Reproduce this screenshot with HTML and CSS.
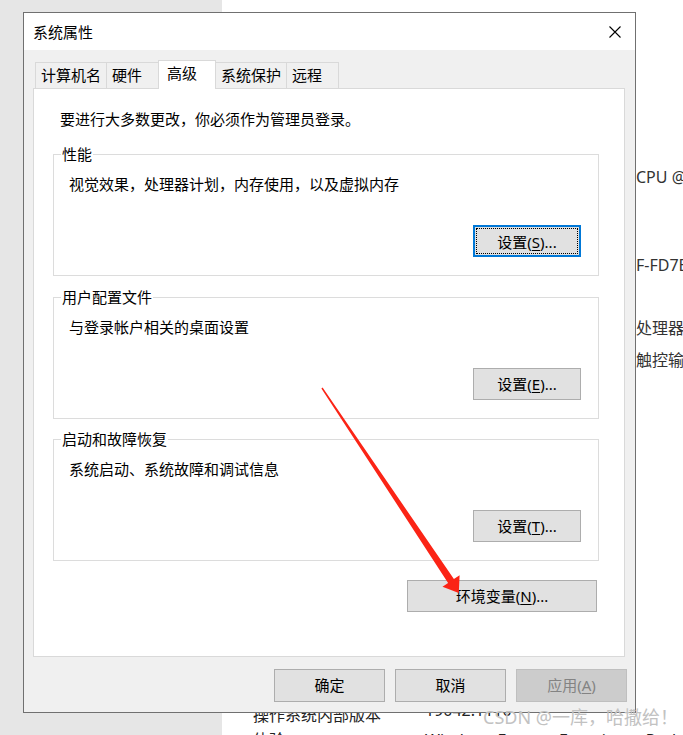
FILE: index.html
```html
<!DOCTYPE html>
<html lang="zh-CN">
<head>
<meta charset="utf-8">
<title>系统属性</title>
<link rel="stylesheet" href="styles.css">
</head>
<body>
<div class="page">
  <aside class="sidebar"></aside>
  <main class="about">
    <p class="security">此设备已受到监视和保护。<span class="link">在 Windows 安全中心中查看</span></p>
    <div class="values">
      <p class="val v1">CPU @ 1.60GHz   1.80 GHz</p>
      <p class="val v2">F-FD7B3C0E</p>
      <p class="val v3">处理器</p>
      <p class="val v4">触控输入</p>
    </div>
    <div class="specs">
      <div class="spec"><span class="spec-k">操作系统内部版本</span><span class="spec-v">19042.1110</span></div>
      <div class="spec"><span class="spec-k">体验</span><span class="spec-v">Windows Feature Experience Pack</span></div>
    </div>
  </main>
</div>

<div class="dialog">
  <div class="titlebar">
    <span class="title">系统属性</span>
    <svg class="close" viewBox="0 0 12 12" width="12" height="12"><path d="M0.5 0.5L11.5 11.5M11.5 0.5L0.5 11.5" stroke="#000" stroke-width="1.1" fill="none"/></svg>
  </div>
  <div class="dlg-body">
    <div class="tabs">
      <div class="tab">计算机名</div>
      <div class="tab">硬件</div>
      <div class="tab tab-active">高级</div>
      <div class="tab">系统保护</div>
      <div class="tab">远程</div>
    </div>
    <div class="panel">
      <p class="intro">要进行大多数更改，你必须作为管理员登录。</p>
      <fieldset class="group">
        <legend>性能</legend>
        <p class="desc">视觉效果，处理器计划，内存使用，以及虚拟内存</p>
        <div class="group-actions"><button class="btn btn-set btn-focus">设置(<u>S</u>)...</button></div>
      </fieldset>
      <fieldset class="group group-2">
        <legend>用户配置文件</legend>
        <p class="desc">与登录帐户相关的桌面设置</p>
        <div class="group-actions"><button class="btn btn-set">设置(<u>E</u>)...</button></div>
      </fieldset>
      <fieldset class="group group-3">
        <legend>启动和故障恢复</legend>
        <p class="desc">系统启动、系统故障和调试信息</p>
        <div class="group-actions"><button class="btn btn-set">设置(<u>T</u>)...</button></div>
      </fieldset>
      <div class="env-row"><button class="btn btn-env">环境变量(<u>N</u>)...</button></div>
    </div>
    <div class="footer">
      <button class="btn btn-foot">确定</button>
      <button class="btn btn-foot">取消</button>
      <button class="btn btn-foot" disabled>应用(<u>A</u>)</button>
    </div>
  </div>
</div>

<div class="watermark">CSDN @一库，哈撒给！</div>

<svg class="arrow" viewBox="0 0 683 735" width="683" height="735">
  <polygon points="322.6,387.6 453.9,579.1 459.6,575.2 458.8,593 442.5,586.8 448.1,582.9 321.4,388.4" fill="#fb2416"/>
</svg>
</body>
</html>
```

FILE: styles.css
```css
* { box-sizing: border-box; }
html, body { margin: 0; padding: 0; }
body {
  width: 683px;
  height: 735px;
  overflow: hidden;
  position: relative;
  background: #fff;
  font-family: "Noto Sans", "Noto Sans CJK SC", sans-serif;
}
p { margin: 0; }

/* background settings page */
.page { display: flex; height: 735px; }
.sidebar { width: 222px; flex: none; background: #e6e6e6; }
.about { flex: 1; min-width: 0; overflow: hidden; font-size: 16px; color: #333; }
.security { padding-top: 9px; margin-left: 33px; line-height: 20px; font-size: 15px; white-space: nowrap; color: #222; }
.link { color: #0067c0; }
.values { margin-left: 414px; white-space: nowrap; }
.val { line-height: 22px; }
.v1 { margin-top: 137px; }
.v2 { margin-top: 66px; }
.v3 { margin-top: 41px; }
.v4 { margin-top: 10px; }
.specs { margin-top: 332px; padding-left: 31px; color: #222; }
.spec { display: flex; align-items: flex-start; line-height: 25px; white-space: nowrap; }
.spec-k { width: 172px; flex: none; }
.spec:first-child .spec-v { line-height: 14px; }

/* dialog window */
.dialog {
  position: absolute;
  left: 23px;
  top: 12px;
  width: 613px;
  border: 1px solid #707070;
  background: #f0f0f0;
  font-size: 15px;
  color: #000;
}
.titlebar {
  height: 37px;
  background: #fff;
  display: flex;
  align-items: center;
  justify-content: space-between;
  padding: 0 14px 0 9px;
}
.title { line-height: 20px; }
.close { display: block; }

.dlg-body { padding: 10px 0 10px 9px; }

.tabs { display: flex; align-items: flex-end; height: 28px; margin-left: 2px; }
.tab {
  position: relative;
  height: 26px;
  min-width: 53px;
  padding: 0 5px;
  margin-left: -1px;
  border: 1px solid #d9d9d9;
  border-bottom: none;
  background: #f0f0f0;
  line-height: 25px;
  white-space: nowrap;
}
.tab:first-child { margin-left: 0; }
.tab-active {
  z-index: 1;
  height: 29px;
  min-width: 58px;
  margin-bottom: -1px;
  padding: 0 7px 0 8px;
  background: #fff;
  line-height: 24px;
}

.panel {
  height: 569px;
  margin-right: 10px;
  border: 1px solid #d9d9d9;
  background: #fff;
  padding: 20px 25px 0 19px;
}
.intro { margin-left: 7px; line-height: 20px; }

.group {
  margin: 15px 0 0;
  padding: 10px 17px 18px 15px;
  border: 1px solid #dcdcdc;
  min-width: 0;
}
.group-2 { margin-top: 11px; }
.group-3 { margin-top: 10px; }
.group legend {
  padding: 0 1px;
  margin-left: -8px;
  line-height: 20px;
}
.desc { line-height: 20px; }
.group-actions { display: flex; justify-content: flex-end; margin-top: 31px; }

.btn {
  font-family: inherit;
  font-size: 15px;
  color: #000;
  background: #e1e1e1;
  border: 1px solid #adadad;
  padding: 0;
  margin: 0;
  height: 32px;
  line-height: 30px;
  white-space: nowrap;
}
.btn u { text-underline-offset: 2px; }
.btn-set { width: 108px; }
.btn-focus {
  border: 2px solid #0078d7;
  outline: 1px dotted #000;
  outline-offset: -4px;
}
.env-row { display: flex; justify-content: flex-end; margin-top: 19px; }
.btn-env { width: 190px; margin-right: 2px; }

.footer {
  display: flex;
  justify-content: flex-end;
  gap: 10px;
  margin-top: 12px;
  padding-right: 8px;
}
.btn-foot { width: 111px; height: 33px; line-height: 31px; }
.btn-foot:disabled { background: #cccccc; border-color: #bfbfbf; color: #838383; }

/* overlays */
.watermark {
  position: absolute;
  left: 483px;
  top: 706px;
  font-size: 18px;
  line-height: 22px;
  color: #c2c2c2;
  white-space: nowrap;
}
.arrow { position: absolute; left: 0; top: 0; pointer-events: none; }
```
